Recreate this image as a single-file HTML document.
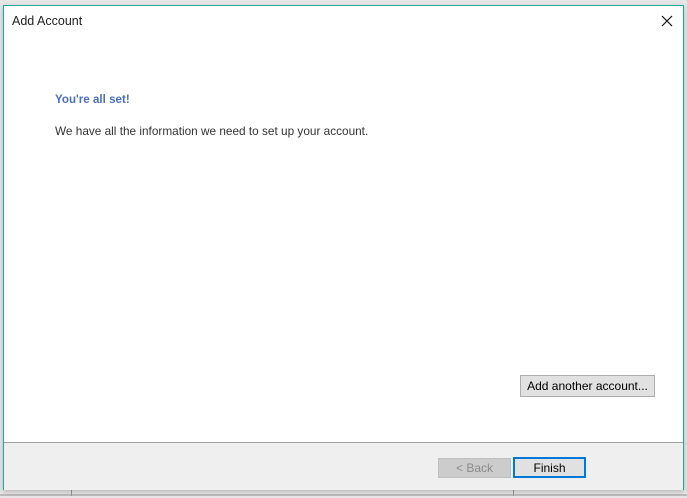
<!DOCTYPE html>
<html><head><style>
body{margin:0;width:687px;height:498px;background:#e6e6e6;position:relative;overflow:hidden;font-family:"Segoe UI","Liberation Sans","DejaVu Sans",sans-serif;font-size:12px;color:#000}
.a{position:absolute}
.win{left:3px;top:5px;width:679px;height:483px;border:1px solid #1fa99a;background:#fff;box-shadow:0 2px 5px rgba(0,0,0,.2)}
.btn{position:absolute;box-sizing:border-box;background:#e1e1e1;border:1px solid #adadad;text-align:center;font-size:12px}
</style></head><body>
<div class="a" style="left:0;top:494px;width:687px;height:2px;background:#bcbcbc"></div>
<div class="a" style="left:71px;top:488px;width:1px;height:8px;background:#999"></div>
<div class="a" style="left:513px;top:488px;width:1px;height:8px;background:#999"></div>
<div class="a win">
<div class="a" style="left:8px;top:8px;font-size:12.5px;color:#222">Add Account</div>
<svg class="a" style="left:657px;top:9px" width="12" height="12"><path d="M1 1L11 11M11 1L1 11" stroke="#111" stroke-width="1.2"/></svg>
<div class="a" style="left:51px;top:87px;color:#4a6fc4;font-weight:bold;font-size:11.6px">You're all set!</div>
<div class="a" style="left:51px;top:118px;color:#333;font-size:11.8px">We have all the information we need to set up your account.</div>
<div class="btn" style="left:516px;top:369px;width:135px;height:22px;line-height:20px">Add another account...</div>
<div class="a" style="left:0;top:436px;width:679px;height:47px;background:#efefef;border-top:1px solid #a0a0a0"></div>
<div class="btn" style="left:434px;top:452px;width:73px;height:20px;line-height:18px;background:#cccccc;border-color:#bfbfbf;color:#8a8a8a">&lt; Back</div>
<div class="btn" style="left:509px;top:451px;width:73px;height:21px;line-height:18px;border:2px solid #0078d7">Finish</div>
</div>
</body></html>
